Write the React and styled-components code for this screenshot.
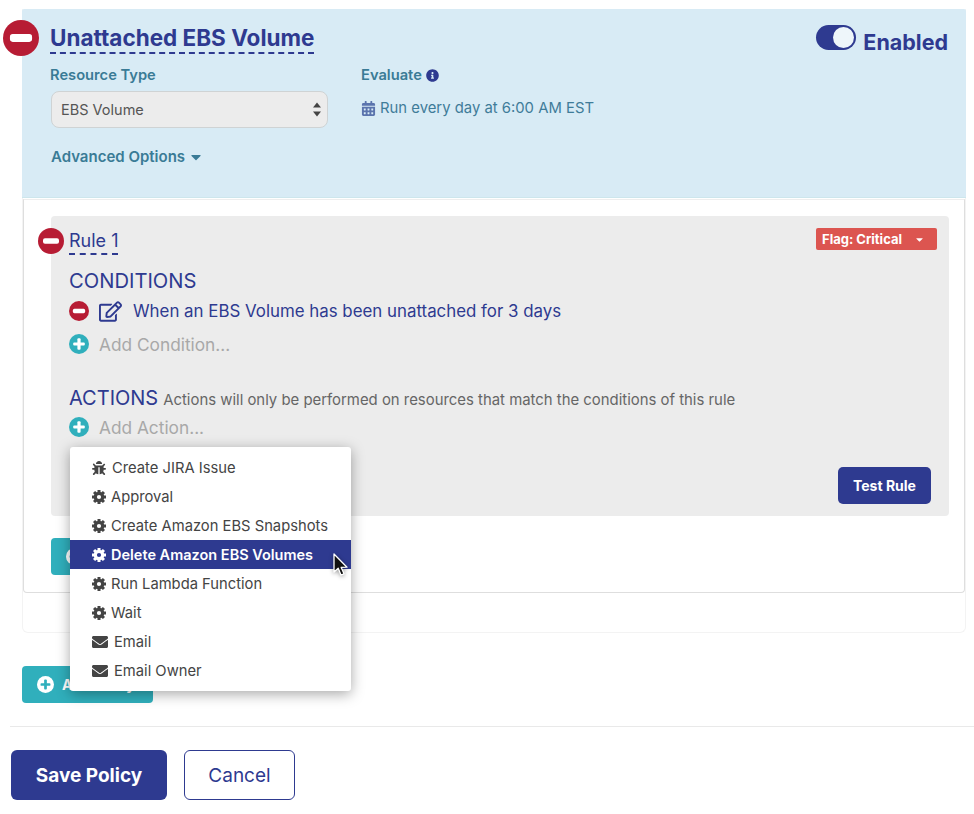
import React from 'react';
import styled, { createGlobalStyle } from 'styled-components';
import { FaBug, FaCalendarAlt, FaCaretDown, FaEnvelope, FaInfoCircle, FaRegEdit } from 'react-icons/fa';

const NAVY = '#2e3a90';
const TEAL = '#30afbc';
const RED = '#b71c34';

const MinusIcon = ({ size, className }) => (
  <svg className={className} width={size} height={size} viewBox="0 0 26 26">
    <circle cx="13" cy="13" r="13" fill={RED} />
    <rect x="5" y="10.2" width="16" height="5.6" rx="2" fill="#fff" />
  </svg>
);

const PlusIcon = ({ size, disc = TEAL, mark = '#fff' }) => (
  <svg width={size} height={size} viewBox="0 0 20 20">
    <circle cx="10" cy="10" r="10" fill={disc} />
    <rect x="4.2" y="8.4" width="11.6" height="3.2" rx="1" fill={mark} />
    <rect x="8.4" y="4.2" width="3.2" height="11.6" rx="1" fill={mark} />
  </svg>
);

const CogIcon = ({ size }) => (
  <svg width={size} height={size} viewBox="0 0 14 14" fill="currentColor">
    <circle cx="7" cy="7" r="3.7" fill="none" stroke="currentColor" strokeWidth="3.2" />
    {[0, 45, 90, 135, 180, 225, 270, 315].map((deg) => (
      <rect key={deg} x="5.5" y="0" width="3" height="3" transform={`rotate(${deg} 7 7)`} />
    ))}
  </svg>
);

const menuItems = [
  { label: 'Create JIRA Issue', icon: FaBug, gap: 6 },
  { label: 'Approval', icon: CogIcon, gap: 5 },
  { label: 'Create Amazon EBS Snapshots', icon: CogIcon, gap: 5 },
  { label: 'Delete Amazon EBS Volumes', icon: CogIcon, gap: 5, active: true },
  { label: 'Run Lambda Function', icon: CogIcon, gap: 5 },
  { label: 'Wait', icon: CogIcon, gap: 5 },
  { label: 'Email', icon: FaEnvelope, gap: 6, wide: true },
  { label: 'Email Owner', icon: FaEnvelope, gap: 6, wide: true },
];

const Arrow = () => (
  <svg width="20" height="27" viewBox="0 0 20 27">
    <path
      d="M3 2 L3 20 L7.2 16.2 L10 23 L13 21.8 L10.2 15.4 L16 15.2 Z"
      fill="#111"
      stroke="#fff"
      strokeWidth="1.3"
      strokeLinejoin="round"
    />
  </svg>
);

const App = () => (
  <>
    <GlobalStyle />
    <Page>
      <PolicyCard>
        <PolicyHeader>
          <PolicyRemove size={36} />
          <TitleRow>
            <PolicyTitle>Unattached EBS Volume</PolicyTitle>
            <ToggleGroup>
              <Toggle />
              <ToggleLabel>Enabled</ToggleLabel>
            </ToggleGroup>
          </TitleRow>
          <FieldRow>
            <TypeField>
              <FieldLabel>Resource Type</FieldLabel>
              <SelectBox>
                EBS Volume
                <SelectArrows viewBox="0 0 8 14">
                  <path d="M4 0 L8 5 L0 5 Z M4 14 L8 9 L0 9 Z" fill="#444" />
                </SelectArrows>
              </SelectBox>
            </TypeField>
            <div>
              <FieldLabel>
                Evaluate <FaInfoCircle size={13} color={NAVY} />
              </FieldLabel>
              <Schedule>
                <FaCalendarAlt size={15} color="#5b74ad" />
                Run every day at 6:00 AM EST
              </Schedule>
            </div>
          </FieldRow>
          <AdvancedLink>
            Advanced Options <FaCaretDown size={16} />
          </AdvancedLink>
        </PolicyHeader>

        <RuleCard>
          <RulePanel>
            <RuleRemove size={26} />
            <RuleTop>
              <RuleTitle>Rule 1</RuleTitle>
              <FlagButton>
                Flag: Critical
                <FaCaretDown size={11} />
              </FlagButton>
            </RuleTop>
            <ConditionsTitle>CONDITIONS</ConditionsTitle>
            <ConditionRow>
              <MinusIcon size={20} />
              <EditIcon size={23} />
              <ConditionText>When an EBS Volume has been unattached for 3 days</ConditionText>
            </ConditionRow>
            <AddRow $top={3}>
              <PlusIcon size={20} />
              Add Condition...
            </AddRow>
            <ActionsHead>
              <ActionsTitle>ACTIONS</ActionsTitle>
              <ActionsNote>Actions will only be performed on resources that match the conditions of this rule</ActionsNote>
            </ActionsHead>
            <AddRow $top={2}>
              <PlusIcon size={20} />
              Add Action...
            </AddRow>
            <TestRow>
              <TestButton>Test Rule</TestButton>
            </TestRow>

            <Menu>
              {menuItems.map((item) => (
                <MenuItem key={item.label} $active={item.active} $gap={item.gap}>
                  <item.icon size={item.wide ? 16 : 14} />
                  {item.label}
                  {item.active && (
                    <Cursor>
                      <Arrow />
                    </Cursor>
                  )}
                </MenuItem>
              ))}
            </Menu>
          </RulePanel>
          {/* label sits under the open menu */}
          <TealButton aria-label="Add Rule">
            <PlusIcon size={17} disc="#fff" mark={TEAL} />
          </TealButton>
        </RuleCard>
      </PolicyCard>

      <AddPolicyButton>
        <PlusIcon size={17} disc="#fff" mark={TEAL} />
        Add Policy
      </AddPolicyButton>

      <Divider />

      <Footer>
        <SaveButton>Save Policy</SaveButton>
        <CancelButton>Cancel</CancelButton>
      </Footer>
    </Page>
  </>
);

const GlobalStyle = createGlobalStyle`
  html, body {
    margin: 0;
    background: #fff;
    font-family: Inter, "Noto Sans", sans-serif;
  }
`;

const Page = styled.div`
  width: 974px;
  height: 814px;
  overflow: hidden;
  padding-top: 9px;
  box-sizing: border-box;
`;

const PolicyCard = styled.div`
  margin: 0 8px 0 22px;
  height: 624px;
  box-sizing: border-box;
  border: 1px solid #f3f3f3;
  border-top: none;
  border-radius: 0 0 6px 6px;
`;

const PolicyHeader = styled.div`
  position: relative;
  height: 189px;
  margin: 0 -1px;
  box-sizing: border-box;
  padding: 14px 18px 0 28px;
  background: #d8ebf5;
  border-bottom: 1px solid #cde6ec;
  border-radius: 2px 2px 0 0;
`;

const PolicyRemove = styled(MinusIcon)`
  position: absolute;
  left: -19px;
  top: 11px;
`;

const TitleRow = styled.div`
  display: flex;
  justify-content: space-between;
  align-items: flex-start;
`;

const PolicyTitle = styled.h1`
  margin: 0;
  font-size: 22.5px;
  line-height: 29px;
  font-weight: 700;
  color: ${NAVY};
  border-bottom: 2px dashed ${NAVY};
`;

const ToggleGroup = styled.div`
  display: flex;
  align-items: flex-start;
  gap: 7px;
  margin-top: 2px;
`;

const Toggle = styled.span`
  position: relative;
  display: block;
  width: 40px;
  height: 25px;
  border-radius: 13px;
  background: ${NAVY};

  &::after {
    content: '';
    position: absolute;
    right: 2px;
    top: 2px;
    width: 21px;
    height: 21px;
    border-radius: 50%;
    background: #eef6fa;
  }
`;

const ToggleLabel = styled.span`
  font-size: 21.5px;
  line-height: 30px;
  padding-top: 2px;
  font-weight: 700;
  color: ${NAVY};
`;

const FieldRow = styled.div`
  display: flex;
  margin-top: 9px;
`;

const TypeField = styled.div`
  width: 311px;
`;

const FieldLabel = styled.div`
  display: flex;
  align-items: center;
  gap: 4px;
  font-size: 14.7px;
  line-height: 18px;
  font-weight: 600;
  color: #3a7b96;
`;

const SelectBox = styled.div`
  position: relative;
  width: 277px;
  height: 37px;
  margin: 7px 0 0 1px;
  box-sizing: border-box;
  padding-left: 9px;
  display: flex;
  align-items: center;
  background: #ececec;
  border: 1px solid #cfd3d4;
  border-radius: 8px;
  font-size: 14.5px;
  color: #555;
`;

const SelectArrows = styled.svg`
  position: absolute;
  right: 6px;
  top: 10px;
  width: 8px;
  height: 15px;
`;

const Schedule = styled.div`
  display: flex;
  align-items: center;
  gap: 4px;
  margin-top: 14px;
  font-size: 14.85px;
  line-height: 20px;
  color: #3f7c99;
`;

const AdvancedLink = styled.div`
  display: flex;
  align-items: center;
  gap: 3px;
  margin-top: 19px;
  margin-left: 1px;
  font-size: 15px;
  line-height: 20px;
  font-weight: 600;
  color: #3a7b96;
`;

const RuleCard = styled.div`
  position: relative;
  height: 394px;
  margin-top: 1px;
  box-sizing: border-box;
  padding: 16px 15px 0 27px;
  background: #fff;
  border: 1px solid #dedede;
  border-top-color: #eee;
  border-radius: 0 0 4px 4px;
`;

const RulePanel = styled.div`
  position: relative;
  height: 300px;
  box-sizing: border-box;
  padding: 12px 12px 0 18px;
  background: #ececec;
  border-radius: 4px;
`;

const RuleRemove = styled(MinusIcon)`
  position: absolute;
  left: -13px;
  top: 12px;
`;

const RuleTop = styled.div`
  display: flex;
  justify-content: space-between;
  align-items: flex-start;
`;

const RuleTitle = styled.span`
  font-size: 18px;
  line-height: 25px;
  color: ${NAVY};
  border-bottom: 2px dashed ${NAVY};
`;

const FlagButton = styled.div`
  display: flex;
  align-items: center;
  justify-content: space-between;
  width: 121px;
  height: 22px;
  box-sizing: border-box;
  padding: 0 12px 0 6px;
  background: #dc5550;
  border-radius: 2px;
  font-size: 13px;
  font-weight: 700;
  color: #fff;
`;

const ConditionsTitle = styled.div`
  margin-top: 14px;
  font-size: 20.2px;
  line-height: 24px;
  color: ${NAVY};
`;

const ConditionRow = styled.div`
  display: flex;
  align-items: center;
  height: 30px;
  margin-top: 3px;
`;

const EditIcon = styled(FaRegEdit)`
  margin: 0 11px 0 10px;
  color: ${NAVY};
`;

const ConditionText = styled.span`
  font-size: 16.87px;
  color: ${NAVY};
`;

const AddRow = styled.div`
  display: flex;
  align-items: center;
  gap: 10px;
  height: 30px;
  margin-top: ${(p) => p.$top}px;
  font-size: 17.3px;
  color: #a8a8a8;
`;

const ActionsHead = styled.div`
  display: flex;
  align-items: baseline;
  gap: 5px;
  margin-top: 27px;
`;

const ActionsTitle = styled.span`
  font-size: 20px;
  line-height: 24px;
  color: ${NAVY};
`;

const ActionsNote = styled.span`
  font-size: 14.9px;
  color: #666;
`;

const TestRow = styled.div`
  display: flex;
  justify-content: flex-end;
  margin-top: 25px;
  padding-right: 6px;
`;

const TestButton = styled.button`
  width: 93px;
  height: 37px;
  border: none;
  border-radius: 5px;
  background: ${NAVY};
  color: #fff;
  font: 700 14px Inter, sans-serif;
`;

const Menu = styled.div`
  position: absolute;
  left: 19px;
  top: 231px;
  z-index: 5;
  width: 281px;
  height: 244px;
  box-sizing: border-box;
  padding-top: 6px;
  background: #fff;
  border-radius: 3px;
  box-shadow: 0 3px 14px rgba(0, 0, 0, 0.35);
`;

const MenuItem = styled.div`
  position: relative;
  display: flex;
  align-items: center;
  gap: ${(p) => p.$gap}px;
  height: 29px;
  padding-left: 22px;
  font-size: ${(p) => (p.$active ? '14.5px' : '14.75px')};
  font-weight: ${(p) => (p.$active ? 600 : 400)};
  color: ${(p) => (p.$active ? '#fff' : '#444')};
  background: ${(p) => (p.$active ? NAVY : 'transparent')};
`;

const Cursor = styled.span`
  position: absolute;
  right: 0;
  top: 12px;
  z-index: 6;
  filter: drop-shadow(0 1px 2px rgba(0, 0, 0, 0.4));
`;

const TealButton = styled.div`
  display: flex;
  align-items: center;
  gap: 8px;
  width: 130px;
  height: 37px;
  margin-top: 22px;
  box-sizing: border-box;
  padding-left: 15px;
  background: ${TEAL};
  border-radius: 4px;
  font-size: 14px;
  font-weight: 700;
  color: #fff;
`;

const AddPolicyButton = styled(TealButton)`
  margin: 33px 0 0 22px;
  width: 131px;
`;

const Divider = styled.hr`
  height: 1px;
  margin: 23px 0 0 10px;
  border: none;
  background: #e9e9e9;
`;

const Footer = styled.div`
  display: flex;
  gap: 17px;
  margin: 23px 0 0 11px;
`;

const SaveButton = styled.button`
  width: 156px;
  height: 50px;
  border: none;
  border-radius: 6px;
  background: ${NAVY};
  color: #fff;
  font: 700 19px Inter, sans-serif;
`;

const CancelButton = styled.button`
  width: 111px;
  height: 50px;
  border: 1px solid ${NAVY};
  border-radius: 6px;
  background: #fff;
  color: ${NAVY};
  font: 400 19px Inter, sans-serif;
`;

export default App;
